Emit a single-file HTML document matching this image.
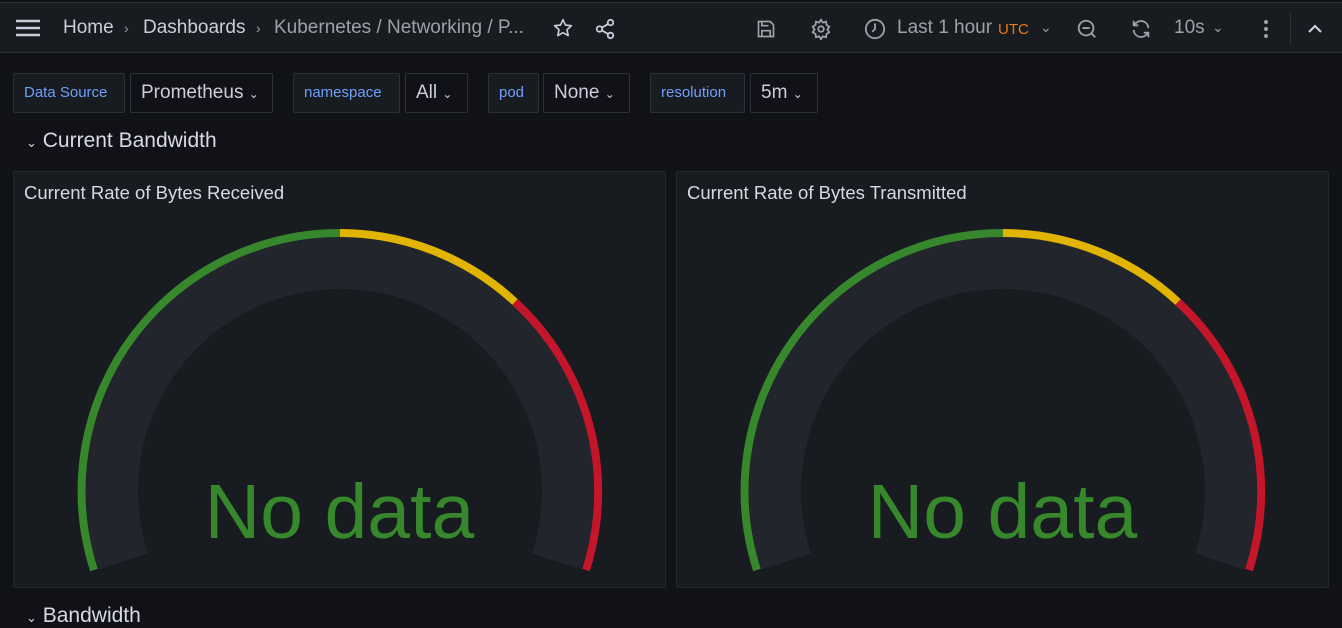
<!DOCTYPE html>
<html><head><meta charset="utf-8"><style>
*{box-sizing:border-box;margin:0;padding:0}
body{width:1342px;height:627px;overflow:hidden;background:#111217;font-family:"Liberation Sans",sans-serif;color:#ccccdc;position:relative}
.top{position:absolute;left:0;top:2px;width:1342px;height:51px;background:#181b1f;border-bottom:1px solid #2c2f35;border-top:1px solid #2c2f35}
.t{position:absolute;font-size:19px;color:#ccccdc;top:14px}
.g{color:#9fa0a8}
.sep{position:absolute;top:17px;font-size:14px;color:#9fa0a8}
.box{position:absolute;top:73px;height:40px;border:1px solid #2c2f35;border-radius:2px;font-size:19px;line-height:38px;padding-left:10px}
.lab{background:#181b1f;color:#6e9fff;font-size:15px}
.val{background:#111217;color:#ccccdc}
.row{position:absolute;font-size:21px;color:#d8d9e3;font-weight:500}
.panel{position:absolute;top:171px;height:417px;background:#181b1f;border:1px solid #24272d;border-radius:2px}
.ptitle{position:absolute;left:10px;top:10px;font-size:18.5px;color:#d8d9e3}
.nd{position:absolute;width:100%;text-align:center;font-size:77px;color:#37872d}
</style></head><body>
<div class="top">
<svg style="position:absolute;left:15px;top:16px" width="26" height="18"><path d="M1 2H25M1 9H25M1 16H25" stroke="#ccccdc" stroke-width="2.4"/></svg>
<div class="t" style="left:63px">Home</div><div class="sep" style="left:124px">›</div>
<div class="t" style="left:143px">Dashboards</div><div class="sep" style="left:256px">›</div>
<div class="t g" style="left:274px">Kubernetes / Networking / P...</div>
<svg style="position:absolute;left:553px;top:15px" width="20" height="20" viewBox="0 0 24 24"><path d="M12 2l3 6.5 7 .8-5.2 4.8 1.4 7L12 17.6 5.8 21.1l1.4-7L2 9.3l7-.8z" fill="none" stroke="#ccccdc" stroke-width="2" stroke-linejoin="round"/></svg>
<svg style="position:absolute;left:594px;top:15px" width="22" height="22" viewBox="0 0 24 24" fill="none" stroke="#ccccdc" stroke-width="2"><circle cx="18" cy="5" r="3"/><circle cx="6" cy="12" r="3"/><circle cx="18" cy="19" r="3"/><path d="M8.6 13.5l6.8 4M15.4 6.5l-6.8 4"/></svg>
<svg style="position:absolute;left:756px;top:16px" width="20" height="20" viewBox="0 0 24 24" fill="none" stroke="#9fa0a8" stroke-width="2"><path d="M4 3h13l4 4v14H3V3z"/><path d="M7 21v-7h10v7M7 3v5h8"/></svg>
<svg style="position:absolute;left:810px;top:15px" width="22" height="22" viewBox="0 0 24 24" fill="none" stroke="#9fa0a8" stroke-width="2"><circle cx="12" cy="12" r="3"/><path d="M12 2l2 3 3.5-1 .5 3.5 3 2-2 3 2 3-3 2-.5 3.5-3.5-1-2 3-2-3-3.5 1L6 17.5l-3-2 2-3-2-3 3-2L6.5 4 10 5z"/></svg>
<svg style="position:absolute;left:864px;top:15px" width="22" height="22" viewBox="0 0 24 24" fill="none" stroke="#9fa0a8" stroke-width="2"><circle cx="12" cy="12" r="10"/><path d="M12 6v6l-3 3"/></svg>
<div class="t g" style="left:897px">Last 1 hour</div>
<div class="t" style="left:998px;top:18px;font-size:15px;color:#eb7b18">UTC</div>
<div class="sep" style="left:1040px;top:16px">⌄</div>
<svg style="position:absolute;left:1076px;top:15px" width="22" height="22" viewBox="0 0 24 24" fill="none" stroke="#9fa0a8" stroke-width="2"><circle cx="11" cy="11" r="8"/><path d="M7 11h8M17 17l4 4"/></svg>
<svg style="position:absolute;left:1130px;top:15px" width="22" height="22" viewBox="0 0 24 24" fill="none" stroke="#9fa0a8" stroke-width="2"><path d="M20 11A8 8 0 0 0 6 6l-2 2M4 13a8 8 0 0 0 14 5l2-2M4 3v5h5M20 21v-5h-5"/></svg>
<div class="t g" style="left:1174px">10s</div>
<div class="sep" style="left:1212px;top:16px">⌄</div>
<svg style="position:absolute;left:1262px;top:16px" width="8" height="20"><circle cx="4" cy="3" r="2" fill="#9fa0a8"/><circle cx="4" cy="10" r="2" fill="#9fa0a8"/><circle cx="4" cy="17" r="2" fill="#9fa0a8"/></svg>
<div style="position:absolute;left:1290px;top:10px;width:1px;height:32px;background:#2c2f35"></div>
<svg style="position:absolute;left:1307px;top:20px" width="16" height="12"><path d="M2 9l6-6 6 6" fill="none" stroke="#ccccdc" stroke-width="2.2"/></svg>
</div>

<div class="box lab" style="left:13px;width:112px">Data Source</div>
<div class="box val" style="left:130px;width:143px">Prometheus <span style="font-size:12px">⌄</span></div>
<div class="box lab" style="left:293px;width:107px">namespace</div>
<div class="box val" style="left:405px;width:63px">All <span style="font-size:12px">⌄</span></div>
<div class="box lab" style="left:488px;width:51px">pod</div>
<div class="box val" style="left:543px;width:87px">None <span style="font-size:12px">⌄</span></div>
<div class="box lab" style="left:650px;width:95px">resolution</div>
<div class="box val" style="left:750px;width:68px">5m <span style="font-size:12px">⌄</span></div>

<div class="row" style="left:26px;top:129px"><span style="font-size:13px">⌄</span> Current Bandwidth</div>

<div class="panel" style="left:13px;width:653px">
<div class="ptitle">Current Rate of Bytes Received</div>
<svg style="position:absolute;left:-13px;top:-171px" width="680" height="600">
<path d="M122.2 560.5 A228 228 0 1 1 555.8 560.5" fill="none" stroke="#22252b" stroke-width="52"/>
<path d="M93 569 A258 258 0 0 1 339 232" fill="none" stroke="#37872d" stroke-width="8"/>
<path d="M339 232 A258 258 0 0 1 514 301" fill="none" stroke="#e0b400" stroke-width="8"/>
<path d="M514 301 A258 258 0 0 1 585 569" fill="none" stroke="#c4162a" stroke-width="8"/>
</svg>
<div class="nd" style="top:296px">No data</div>
</div>

<div class="panel" style="left:676px;width:653px">
<div class="ptitle">Current Rate of Bytes Transmitted</div>
<svg style="position:absolute;left:-13px;top:-171px" width="680" height="600">
<path d="M122.2 560.5 A228 228 0 1 1 555.8 560.5" fill="none" stroke="#22252b" stroke-width="52"/>
<path d="M93 569 A258 258 0 0 1 339 232" fill="none" stroke="#37872d" stroke-width="8"/>
<path d="M339 232 A258 258 0 0 1 514 301" fill="none" stroke="#e0b400" stroke-width="8"/>
<path d="M514 301 A258 258 0 0 1 585 569" fill="none" stroke="#c4162a" stroke-width="8"/>
</svg>
<div class="nd" style="top:296px">No data</div>
</div>

<div class="row" style="left:26px;top:604px"><span style="font-size:13px">⌄</span> Bandwidth</div>
</body></html>
